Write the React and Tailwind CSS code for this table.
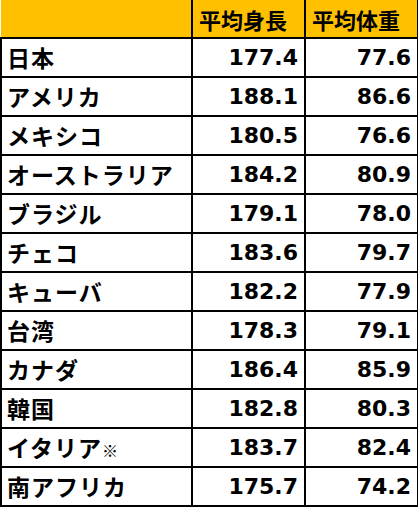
const ROWS = [
  ['日本', '177.4', '77.6'],
  ['アメリカ', '188.1', '86.6'],
  ['メキシコ', '180.5', '76.6'],
  ['オーストラリア', '184.2', '80.9'],
  ['ブラジル', '179.1', '78.0'],
  ['チェコ', '183.6', '79.7'],
  ['キューバ', '182.2', '77.9'],
  ['台湾', '178.3', '79.1'],
  ['カナダ', '186.4', '85.9'],
  ['韓国', '182.8', '80.3'],
  ['イタリア', '183.7', '82.4', true],
  ['南アフリカ', '175.7', '74.2'],
]

const jp = "font-['Noto_Sans_CJK_JP',sans-serif]"
const num = "font-['DejaVu_Sans','Noto_Sans_CJK_JP',sans-serif]"

export default function App() {
  return (
    <div className="w-[418px] h-[509px] bg-white text-black">
      <table className="table-fixed border-collapse w-[417px]">
        <colgroup>
          <col className="w-[191px]" />
          <col className="w-[113px]" />
          <col className="w-[113px]" />
        </colgroup>
        <thead>
          <tr className="h-[38px] bg-[#FFC000]">
            <th className="border-2 border-t-0 border-l-0 border-black" />
            <th className={`border-2 border-t-0 border-black text-left pl-[6px] text-[22px] font-bold leading-none ${jp}`}>平均身長</th>
            <th className={`border-2 border-t-0 border-black text-left pl-[6px] text-[22px] font-bold leading-none ${jp}`}>平均体重</th>
          </tr>
        </thead>
        <tbody>
          {ROWS.map(([name, h, w, note]) => (
            <tr key={name} className="h-[39px]">
              <td className={`border-2 border-black pl-[5px] text-[23px] tracking-[1px] font-bold leading-none whitespace-nowrap ${jp}`}>
                {name}
                {note && <span className="text-[16px] font-normal tracking-normal">※</span>}
              </td>
              <td className={`border-2 border-black text-right pr-[6px] text-[22px] font-bold leading-none ${num}`}>{h}</td>
              <td className={`border-2 border-black text-right pr-[6px] text-[22px] font-bold leading-none ${num}`}>{w}</td>
            </tr>
          ))}
        </tbody>
      </table>
    </div>
  )
}
